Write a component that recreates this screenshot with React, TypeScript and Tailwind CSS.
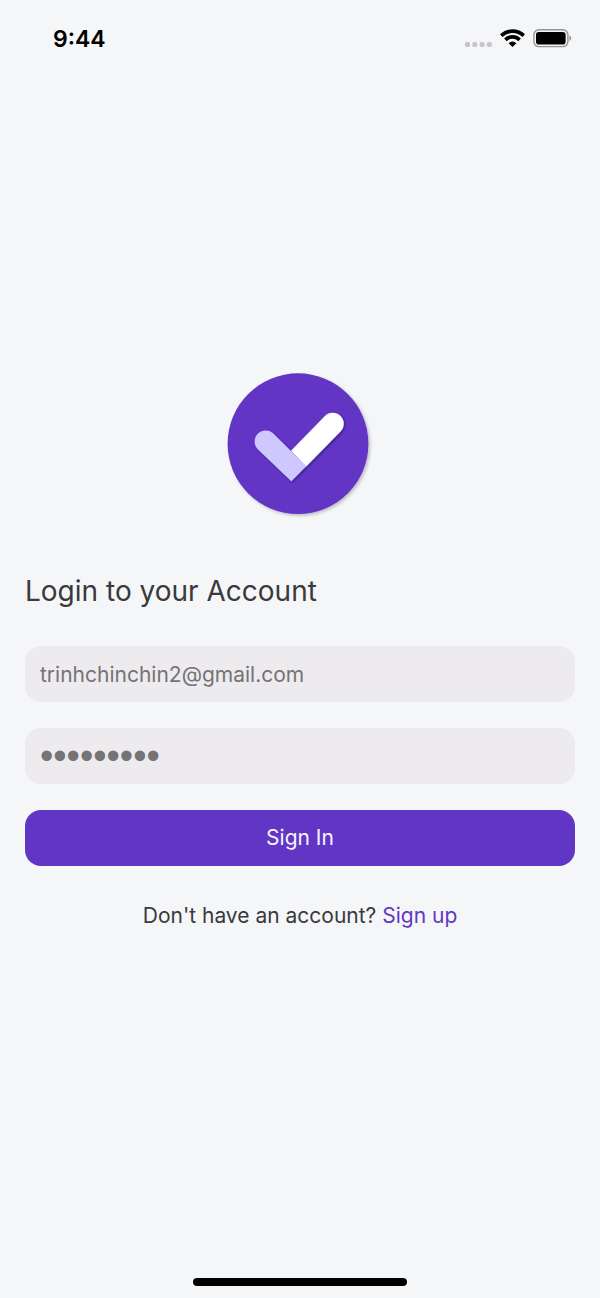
function StatusBar() {
  return (
    <header className="flex h-[78px] items-center justify-between pr-[28px] pl-[53px]">
      <time className="text-[23px] leading-7 font-semibold text-black">9:44</time>
      <div className="flex items-center gap-2">
        <svg width="27" height="20" viewBox="0 0 27 20" fill="#c6c6c8" role="img" aria-label="No signal">
          <rect x="0" y="13" width="5" height="5" rx="1.8" />
          <rect x="7.3" y="13" width="5" height="5" rx="1.8" />
          <rect x="14.6" y="13" width="5" height="5" rx="1.8" />
          <rect x="21.9" y="13" width="5" height="5" rx="1.8" />
        </svg>
        <svg width="25" height="20" viewBox="0 0 25 20" role="img" aria-label="Wi-Fi">
          <g fill="none" stroke="#000" strokeWidth="3.7">
            <path d="M1.3 6.6 A16.2 16.2 0 0 1 23.7 6.6" />
            <path d="M5.4 10.8 A10.3 10.3 0 0 1 19.6 10.8" />
          </g>
          <path d="M12.5 18 L8.6 14.2 A5.4 5.4 0 0 1 16.4 14.2 Z" />
        </svg>
        <svg width="39" height="20" viewBox="0 0 39 20" role="img" aria-label="Battery full">
          <rect x="0.9" y="0.8" width="34" height="16.8" rx="5" fill="none" stroke="#949496" strokeWidth="1.4" />
          <rect x="3" y="2.9" width="29.6" height="12.6" rx="2.8" />
          <path d="M36.4 6.6 C38.8 7.4 38.8 11.2 36.4 12 Z" fill="#949496" />
        </svg>
      </div>
    </header>
  );
}

function Logo() {
  return (
    <svg width="150" height="150" viewBox="0 0 150 150" className="mx-auto" role="img" aria-label="Check mark logo">
      <defs>
        <filter id="disc-shadow" x="-10%" y="-10%" width="120%" height="120%">
          <feDropShadow dx="1.8" dy="1.8" stdDeviation="1.8" floodColor="#000" floodOpacity="0.22" />
        </filter>
        <filter id="tick-shadow" x="-10%" y="-10%" width="125%" height="125%">
          <feDropShadow dx="1.2" dy="1.2" stdDeviation="1.1" floodColor="#1c0860" floodOpacity="0.6" />
        </filter>
      </defs>
      <circle cx="73" cy="73.7" r="70.4" fill="#6236c4" filter="url(#disc-shadow)" />
      <g filter="url(#tick-shadow)">
        <path d="M66 80.7 L99.9 45.9 A11 11 0 0 1 115.5 61.5 L81.2 96.4 Z" fill="#fff" />
        <path d="M48.6 63.8 L81.2 96.2 L66.3 111.3 L32.8 79.2 A11 11 0 0 1 48.6 63.8 Z" fill="#cfc8ff" />
      </g>
    </svg>
  );
}

const fieldClass =
  "block h-14 w-full rounded-2xl bg-[#edebee] px-[15px] text-[#747376] outline-none focus:ring-1 focus:ring-[#6236c4]";

export default function App() {
  return (
    <div className="flex min-h-screen flex-col bg-[#f5f6f8] font-['Inter','Liberation_Sans',sans-serif] text-[#3a393b]">
      <StatusBar />
      <main className="flex flex-1 flex-col justify-center px-[25px]">
        <Logo />
        <h1 className="mt-[50px] text-[28px] leading-[42px]">Login to your Account</h1>
        <form className="mt-[34px] flex flex-col gap-[26px]" onSubmit={(e) => e.preventDefault()}>
          <input
            type="email"
            aria-label="Email"
            autoComplete="email"
            defaultValue="trinhchinchin2@gmail.com"
            className={`${fieldClass} text-[21px] leading-7`}
          />
          <input
            type="password"
            aria-label="Password"
            autoComplete="current-password"
            defaultValue="chinchin2"
            className={`${fieldClass} font-['Liberation_Sans',sans-serif] text-[38px] leading-[42px]`}
          />
          <button type="submit" className="h-14 rounded-2xl bg-[#6236c4] text-[21px] leading-7 text-[#f5f3fb]">
            Sign In
          </button>
        </form>
        <p className="mt-9 text-center text-[21px] leading-7">
          Don't have an account?{" "}
          <a href="#signup" className="text-[#6236c4]">
            Sign up
          </a>
        </p>
      </main>
      <footer className="flex h-[76px] items-end justify-center pb-3">
        <div className="h-2 w-[214px] rounded-full bg-black" />
      </footer>
    </div>
  );
}
